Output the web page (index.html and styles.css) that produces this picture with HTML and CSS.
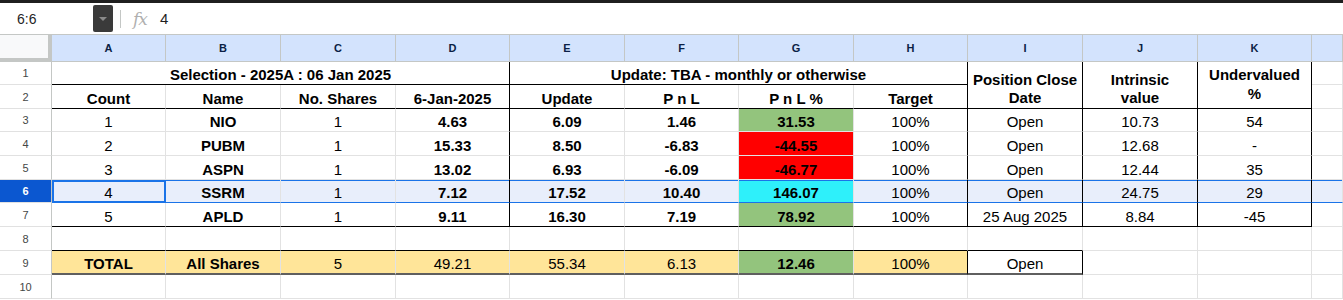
FILE: index.html
```html
<!DOCTYPE html>
<html lang="en">
<head>
    <meta charset="UTF-8">
    <title>Selection 2025A</title>
    <link rel="stylesheet" href="styles.css">
</head>
<body>

    <div class="formula-bar">
        <div class="name-box">6:6</div>
        <div class="name-drop"><span class="caret"></span></div>
        <div class="divider"></div>
        <div class="fx">fx</div>
        <div class="formula-value">4</div>
    </div>

    <div class="sheet">
        <!-- column headers -->
        <div class="corner"></div>
        <div class="col-head">A</div>
        <div class="col-head">B</div>
        <div class="col-head">C</div>
        <div class="col-head">D</div>
        <div class="col-head">E</div>
        <div class="col-head">F</div>
        <div class="col-head">G</div>
        <div class="col-head">H</div>
        <div class="col-head">I</div>
        <div class="col-head">J</div>
        <div class="col-head">K</div>
        <div class="col-head"></div>

        <!-- row 1 -->
        <div class="row-head">1</div>
        <div class="cell b span4 rb bb">Selection - 2025A : 06 Jan 2025</div>
        <div class="cell b span4 rb bb">Update: TBA - monthly or otherwise</div>
        <div class="cell b tall rb bb">Position Close<br>Date</div>
        <div class="cell b tall rb bb">Intrinsic<br>value</div>
        <div class="cell b tall mid rb bb">Undervalued<br>%</div>
        <div class="cell"></div>

        <!-- row 2 -->
        <div class="row-head">2</div>
        <div class="cell b bb">Count</div>
        <div class="cell b bb">Name</div>
        <div class="cell b bb">No. Shares</div>
        <div class="cell b bb rb">6-Jan-2025</div>
        <div class="cell b bb">Update</div>
        <div class="cell b bb">P n L</div>
        <div class="cell b bb">P n L %</div>
        <div class="cell b bb rb">Target</div>
        <div class="cell"></div>

        <!-- row 3 -->
        <div class="row-head">3</div>
        <div class="cell">1</div>
        <div class="cell b">NIO</div>
        <div class="cell">1</div>
        <div class="cell b rb">4.63</div>
        <div class="cell b">6.09</div>
        <div class="cell b">1.46</div>
        <div class="cell b up">31.53</div>
        <div class="cell rb">100%</div>
        <div class="cell rb">Open</div>
        <div class="cell rb">10.73</div>
        <div class="cell rb">54</div>
        <div class="cell"></div>

        <!-- row 4 -->
        <div class="row-head">4</div>
        <div class="cell">2</div>
        <div class="cell b">PUBM</div>
        <div class="cell">1</div>
        <div class="cell b rb">15.33</div>
        <div class="cell b">8.50</div>
        <div class="cell b">-6.83</div>
        <div class="cell b down">-44.55</div>
        <div class="cell rb">100%</div>
        <div class="cell rb">Open</div>
        <div class="cell rb">12.68</div>
        <div class="cell rb">-</div>
        <div class="cell"></div>

        <!-- row 5 -->
        <div class="row-head">5</div>
        <div class="cell">3</div>
        <div class="cell b">ASPN</div>
        <div class="cell">1</div>
        <div class="cell b rb">13.02</div>
        <div class="cell b">6.93</div>
        <div class="cell b">-6.09</div>
        <div class="cell b down">-46.77</div>
        <div class="cell rb">100%</div>
        <div class="cell rb">Open</div>
        <div class="cell rb">12.44</div>
        <div class="cell rb">35</div>
        <div class="cell"></div>

        <!-- row 6 (selected) -->
        <div class="row-head on">6</div>
        <div class="cell sel active">4</div>
        <div class="cell b sel">SSRM</div>
        <div class="cell sel">1</div>
        <div class="cell b sel rb">7.12</div>
        <div class="cell b sel">17.52</div>
        <div class="cell b sel">10.40</div>
        <div class="cell b sel hot">146.07</div>
        <div class="cell sel rb">100%</div>
        <div class="cell sel rb">Open</div>
        <div class="cell sel rb">24.75</div>
        <div class="cell sel rb">29</div>
        <div class="cell sel"></div>

        <!-- row 7 -->
        <div class="row-head">7</div>
        <div class="cell bb">5</div>
        <div class="cell b bb">APLD</div>
        <div class="cell bb">1</div>
        <div class="cell b bb rb">9.11</div>
        <div class="cell b bb">16.30</div>
        <div class="cell b bb">7.19</div>
        <div class="cell b bb up">78.92</div>
        <div class="cell bb rb">100%</div>
        <div class="cell bb rb">25 Aug 2025</div>
        <div class="cell bb rb">8.84</div>
        <div class="cell bb rb">-45</div>
        <div class="cell"></div>

        <!-- row 8 -->
        <div class="row-head">8</div>
        <div class="cell bb"></div>
        <div class="cell bb"></div>
        <div class="cell bb"></div>
        <div class="cell bb"></div>
        <div class="cell bb"></div>
        <div class="cell bb"></div>
        <div class="cell bb"></div>
        <div class="cell bb"></div>
        <div class="cell bb"></div>
        <div class="cell"></div>
        <div class="cell"></div>
        <div class="cell"></div>

        <!-- row 9 totals -->
        <div class="row-head">9</div>
        <div class="cell b total thick">TOTAL</div>
        <div class="cell b total thick">All Shares</div>
        <div class="cell total thick">5</div>
        <div class="cell total thick">49.21</div>
        <div class="cell total thick">55.34</div>
        <div class="cell total thick">6.13</div>
        <div class="cell b up thick">12.46</div>
        <div class="cell total thick rb">100%</div>
        <div class="cell thick rb">Open</div>
        <div class="cell"></div>
        <div class="cell"></div>
        <div class="cell"></div>

        <!-- row 10 -->
        <div class="row-head">10</div>
        <div class="cell"></div>
        <div class="cell"></div>
        <div class="cell"></div>
        <div class="cell"></div>
        <div class="cell"></div>
        <div class="cell"></div>
        <div class="cell"></div>
        <div class="cell"></div>
        <div class="cell"></div>
        <div class="cell"></div>
        <div class="cell"></div>
        <div class="cell"></div>
    </div>

</body>
</html>
```

FILE: styles.css
```css
* {
    box-sizing: border-box;
}

body {
    margin: 0;
    font-family: 'Liberation Sans', Arial, sans-serif;
    background-color: #FFF;
    color: #000;
    overflow: hidden;
}

/* formula bar */
.formula-bar {
    display: flex;
    align-items: center;
    height: 35px;
    border-top: 3px solid #1F1F1F;
    border-bottom: 1px solid #C4C7C5;
}

.name-box {
    width: 93px;
    padding-left: 17px;
    font-size: 14px;
    color: #1F1F1F;
}

.name-drop {
    display: flex;
    align-items: center;
    justify-content: center;
    width: 20px;
    height: 27px;
    background-color: #3A3A3A;
    border-radius: 2px;
}

.caret {
    width: 0;
    height: 0;
    border-left: 4px solid transparent;
    border-right: 4px solid transparent;
    border-top: 4px solid #8A8A8A;
}

.divider {
    width: 1px;
    height: 18px;
    margin: 0 12px 0 7px;
    background-color: #C4C7C5;
}

.fx {
    font-family: 'DejaVu Serif', 'Liberation Serif', serif;
    font-style: italic;
    font-size: 17px;
    color: #B0B0B0;
    letter-spacing: -1px;
    width: 27px;
}

.formula-value {
    font-size: 15px;
    color: #1F1F1F;
}

/* grid */
.sheet {
    display: grid;
    grid-template-columns: 52px 114px 115px 115px 114px 115px 114px 115px 114px 115px 115px 114px 1fr;
    grid-template-rows: 27px 23px 24px 23px 24px 24px 23px 24px 24px 24px 24px;
}

.corner {
    background-color: #F8F9FA;
    border-right: 4px solid #C4C7C5;
    border-bottom: 4px solid #C4C7C5;
}

.col-head {
    display: flex;
    align-items: center;
    justify-content: center;
    background-color: #D3E3FD;
    border-right: 1px solid #C4C7C5;
    border-bottom: 1px solid #C4C7C5;
    font-size: 11px;
    font-weight: bold;
    color: #0B1F45;
}

.row-head {
    display: flex;
    align-items: center;
    justify-content: center;
    background-color: #FFF;
    border-right: 1px solid #C4C7C5;
    border-bottom: 1px solid #E1E1E1;
    font-size: 11px;
    color: #444746;
}

.row-head.on {
    background-color: #0B57D0;
    color: #FFF;
    font-weight: bold;
}

.cell {
    display: flex;
    align-items: flex-end;
    justify-content: center;
    padding: 0 3px;
    border-right: 1px solid #E2E2E2;
    border-bottom: 1px solid #E2E2E2;
    font-size: 15px;
    line-height: 18px;
    white-space: nowrap;
    overflow: hidden;
    text-align: center;
}

.b {
    font-weight: bold;
}

.rb {
    border-right-color: #000;
}

.bb {
    border-bottom-color: #000;
}

.span4 {
    grid-column: span 4;
}

.tall {
    grid-row: span 2;
    white-space: normal;
    padding-bottom: 1px;
}

.mid {
    align-items: center;
    line-height: 19px;
    padding-bottom: 2px;
}

.up {
    background-color: #93C47D;
}

.down {
    background-color: #FF0000;
}

.total {
    background-color: #FFE599;
}

.thick {
    border-bottom: 2px solid #5F5F5F;
}

/* selected row */
.sel {
    background-color: #E8EEFB;
    box-shadow: inset 0 1px #1A73E8;
    border-bottom-color: #1A73E8;
}

.sel.hot {
    background-color: #2EF0FA;
}

.active {
    outline: 2px solid #1A73E8;
    outline-offset: -2px;
}
```
